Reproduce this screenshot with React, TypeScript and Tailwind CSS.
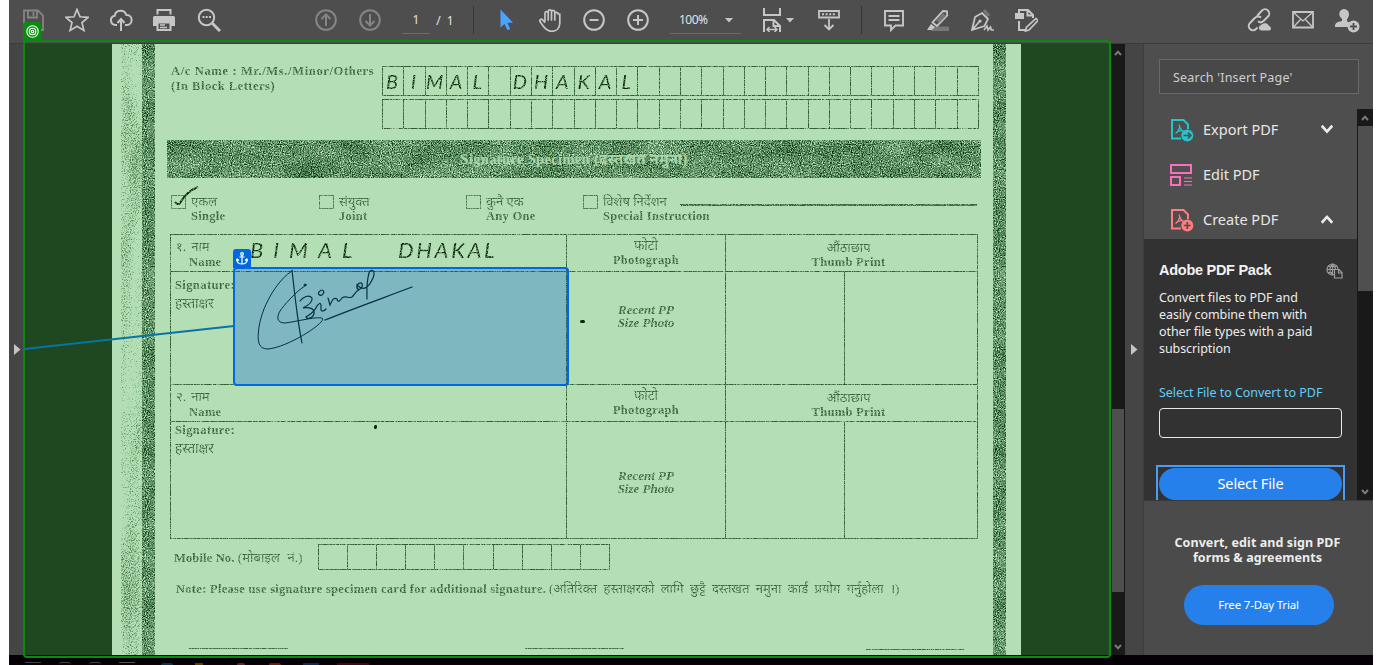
import React from "react";
import clsx from "clsx";

const SERIF = "font-['Liberation_Serif','Noto_Sans_Devanagari','Noto_Sans',serif]";
const UI = "font-['Noto_Sans','Open_Sans',sans-serif]";

function Slot({ children, className }: { children: React.ReactNode; className?: string }) {
  return <div className={clsx("flex h-10 w-11 shrink-0 items-center justify-center", className)}>{children}</div>;
}

function Icon({ children, w = 24, h = 24, sw = 2, className }: { children: React.ReactNode; w?: number; h?: number; sw?: number; className?: string }) {
  return (
    <svg width={w} height={h} viewBox={`0 0 ${w} ${h}`} fill="none" stroke="currentColor" strokeWidth={sw} className={clsx("shrink-0", className)}>
      {children}
    </svg>
  );
}

function Toolbar() {
  return (
    <div className="flex h-11 shrink-0 items-start border-b border-[#3b3b3b] bg-[#4e4e4e] pl-[2px] text-[#c6c6c6]">
      <Slot className="text-[#858585]">
        <Icon sw={1.8}>
          <path d="M3 2.5h14l5 5V22H3zM7 2.5v7h9v-7M12.500 4v4" />
        </Icon>
      </Slot>
      <Slot>
        <Icon sw={1.7}>
          <path d="M12 1.500l3 7.300 8 .6-6 5.200 1.900 7.800L12 18.200l-6.900 4.200L7 14.600 1 9.400l8-.6z" />
        </Icon>
      </Slot>
      <Slot>
        <Icon sw={2}>
          <path d="M8 17H6.500a4.700 4.700 0 0 1-.8-9.300A6 6 0 0 1 17.300 7 4.800 4.800 0 0 1 18 17h-2M12 23V11.500M8.500 15L12 11l3.500 4" />
        </Icon>
      </Slot>
      <Slot className="-ml-px mr-px">
        <Icon>
          <path d="M5.500 6.500V2h13v4.500" />
          <path d="M2.500 8h19a1.500 1.500 0 0 1 1.500 1.500V18h-4v-3H5v3H1V9.500A1.500 1.500 0 0 1 2.500 8z" fill="currentColor" stroke="none" />
          <path d="M5.500 14.500h13V22h-13z" fill="#4e4e4e" />
          <path d="M8 17h5M8 19.500h7" strokeWidth="1.300" />
        </Icon>
      </Slot>
      <Slot>
        <Icon>
          <circle cx="9.500" cy="9.500" r="7.700" />
          <path d="M15.300 15.300L23 23" strokeWidth="3" />
          <path d="M5.500 9h2M8.700 9h2M12 9h2" />
        </Icon>
      </Slot>
      <Slot className="ml-[73px] text-[#858585]">
        <Icon>
          <circle cx="12" cy="12" r="9.800" />
          <path d="M12 18V7M7.500 11L12 6.500l4.500 4.500" />
        </Icon>
      </Slot>
      <Slot className="text-[#858585]">
        <Icon>
          <circle cx="12" cy="12" r="9.800" />
          <path d="M12 6v11M7.500 13l4.500 4.500 4.500-4.500" />
        </Icon>
      </Slot>
      <div className={clsx("ml-[10px] flex h-[34px] w-[28px] items-center justify-center border-b border-[#6b6b6b] pt-[7px] text-[12px] text-[#e2e2e2]", UI)}>1</div>
      <div className={clsx("ml-[4px] mr-px flex h-[34px] w-[22px] items-center justify-center whitespace-pre pt-[7px] text-[12px] text-[#e2e2e2] [word-spacing:3px]", UI)}>/ 1</div>
      <div className="ml-[16px] mt-[6px] h-7 w-px bg-[#383838]" />
      <Slot className="ml-[10px] text-[#4ba3ff]">
        <Icon>
          <path d="M6.500 1.500v18l4-3.600 3 6.300 2.700-1.300-2.800-6.200H19z" fill="currentColor" stroke="none" />
        </Icon>
      </Slot>
      <Slot>
        <Icon sw={1.700}>
          <path d="M7 13.500V5.300a1.600 1.600 0 0 1 3.200 0V12 3.200a1.700 1.700 0 0 1 3.300 0V12 3.600a1.700 1.700 0 0 1 3.300 0V12 6a1.600 1.600 0 0 1 3.200 0l1.800 0V15c0 5-3 8.300-8.200 8.300-5.400 0-7.800-4.300-11.600-9.800-.9-2 1.500-3 2.800-1.500L7 14.700" strokeLinejoin="round" />
        </Icon>
      </Slot>
      <Slot>
        <Icon>
          <circle cx="12" cy="12" r="9.800" />
          <path d="M7.500 12h9" />
        </Icon>
      </Slot>
      <Slot>
        <Icon>
          <circle cx="12" cy="12" r="9.800" />
          <path d="M7 12h10M12 7v10" />
        </Icon>
      </Slot>
      <div className={clsx("ml-[10px] flex h-[34px] w-[71px] items-center border-b border-[#6b6b6b] pl-[9px] pt-[7px] text-[12px] text-[#e2e2e2]", UI)}>
        <span className="w-[46px] tracking-[-0.500px]">100%</span>
        <Icon w={8} h={5} sw={0}><path d="M0 0h8L4 4.500z" fill="#c6c6c6" /></Icon>
      </div>
      <div className="ml-[20px] flex h-10 w-[36px] items-center">
        <Icon sw={2} className="-ml-px">
          <path d="M4 0v7h16V0M4 24V12h10l6 6v6M13.500 12v6H20" />
          <path d="M7 21.500h10M9.500 19L7 21.500 9.500 24M14.500 19l2.500 2.500L14.500 24" strokeWidth="1.500" />
        </Icon>
        <Icon w={8} h={5} sw={0} className="ml-[2px]"><path d="M0 0h8L4 4.500z" fill="currentColor" /></Icon>
      </div>
      <Slot className="ml-[10px]">
        <Icon>
          <path d="M2 3h20v6.500H2zM12 11v10.500M7.500 17l4.500 4.500 4.500-4.500" strokeWidth="1.800" />
          <path d="M5 6.200h14" strokeDasharray="2 1.600" />
        </Icon>
      </Slot>
      <div className="ml-[10px] mt-[6px] h-7 w-px bg-[#383838]" />
      <Slot className="ml-[10px]">
        <Icon sw={1.900}>
          <path d="M3 3h18v14.500h-7.500L9 22v-4.500H3zM6.500 8h11M6.500 12h11" />
        </Icon>
      </Slot>
      <Slot>
        <Icon>
          <path d="M9 18.500h14V23H5z" fill="#777" stroke="none" />
          <path d="M17 3l4 .3.200 4L11 18l-4.500-3.500z" strokeWidth="1.800" />
          <path d="M17 5l3 3-7 7-3-3z" fill="#777" stroke="none" />
          <path d="M5 16l4 3-3 3H1z" fill="currentColor" stroke="none" />
        </Icon>
      </Slot>
      <Slot>
        <Icon sw={1.800}>
          <path d="M14 2l5 6" stroke="#777" strokeWidth="3" />
          <path d="M12 5l6 6-3.500 7L2 22 5 9zM2.500 21.500l7-8" />
          <circle cx="10" cy="13" r="1.600" fill="currentColor" stroke="none" />
          <path d="M14 22l3-4 1 4 2.500-3 .8 3H24" strokeWidth="1.600" />
        </Icon>
      </Slot>
      <Slot>
        <Icon>
          <path d="M1 5h9v6H1z" fill="currentColor" stroke="none" />
          <path d="M5 5V2h9l5 5v3M13.500 2v5.500H19M5 13v9h7" />
          <path d="M22 10.500l2 2L15 22l-3.500 1 .8-3.500z" strokeWidth="1.700" />
        </Icon>
      </Slot>
      <Slot className="ml-[189px]">
        <Icon sw={2}>
          <path d="M10 8l5-5.500a4.200 4.200 0 0 1 6 6L16.500 13a4.200 4.200 0 0 1-5.500.3M14 9.500a4.200 4.200 0 0 0-6 .3L3 15a4.200 4.200 0 0 0 6 6l1.500-1.500" />
          <path d="M14 23a3.300 3.300 0 0 1 .3-6.500A4.500 4.500 0 0 1 22 17.500 3 3 0 0 1 23 23z" fill="currentColor" stroke="#4e4e4e" strokeWidth="1" />
        </Icon>
      </Slot>
      <Slot>
        <Icon sw={1.800}>
          <path d="M2 4h20v15.500H2z" />
          <path d="M2 4l10 9 10-9M2 19.500l7.500-8M22 19.500l-7.500-8" strokeWidth="1.300" />
        </Icon>
      </Slot>
      <Slot>
        <Icon w={26} h={26}>
          <path d="M10 2a5 5 0 0 1 5 5.200c0 2.400-1 3.600-2 5v2l3 1.500a6.500 6.500 0 0 0-2 4.300H1c0-4.500 2-4.700 7-6v-2C6.500 10.500 5.300 9 5.300 7A4.800 4.800 0 0 1 10 2z" fill="currentColor" stroke="none" />
          <circle cx="19.500" cy="19.500" r="6" fill="currentColor" stroke="none" />
          <path d="M16 19.500h7M19.500 16v7" stroke="#4e4e4e" strokeWidth="1.800" />
        </Icon>
      </Slot>
    </div>
  );
}

function Filters() {
  const gray = "1 0 0 0 0  1 0 0 0 0  1 0 0 0 0  0 0 0 0 1";
  return (
    <svg width="0" height="0" className="absolute">
      <filter id="band" x="0" y="0" width="100%" height="100%" colorInterpolationFilters="sRGB">
        <feTurbulence type="fractalNoise" baseFrequency="0.9" numOctaves="2" seed="4" />
        <feColorMatrix values={gray} result="fine" />
        <feTurbulence type="fractalNoise" baseFrequency="0.025 0.05" numOctaves="3" seed="9" />
        <feColorMatrix values={gray} result="coarse" />
        <feComposite in="fine" in2="coarse" operator="arithmetic" k2="0.820" k3="0.180" />
        <feColorMatrix values="1.750 0 0 0 -0.500  1.600 0 0 0 -0.235  1.650 0 0 0 -0.430  0 0 0 0 1" />
      </filter>
      <filter id="speck" x="0" y="0" width="100%" height="100%" colorInterpolationFilters="sRGB">
        <feTurbulence type="fractalNoise" baseFrequency="0.85" numOctaves="2" seed="12" />
        <feColorMatrix values={gray} result="fine" />
        <feTurbulence type="fractalNoise" baseFrequency="0.05 0.012" numOctaves="2" seed="3" />
        <feColorMatrix values={gray} result="coarse" />
        <feComposite in="fine" in2="coarse" operator="arithmetic" k2="0.650" k3="0.350" />
        <feColorMatrix values="0 0 0 0 0.270  0 0 0 0 0.480  0 0 0 0 0.290  4.500 0 0 0 -2.350" />
      </filter>
      <filter id="worn" x="0" y="0" width="100%" height="100%" colorInterpolationFilters="sRGB">
        <feTurbulence type="fractalNoise" baseFrequency="0.9" numOctaves="2" seed="7" />
        <feColorMatrix values="0 0 0 0 0  0 0 0 0 0  0 0 0 0 0  2.500 0 0 0 -0.450" result="m" />
        <feComposite in="SourceGraphic" in2="m" operator="in" />
      </filter>
    </svg>
  );
}

function Noise({ filter, className }: { filter: string; className: string }) {
  return (
    <svg className={className} preserveAspectRatio="none">
      <rect width="100%" height="100%" fill="#5c8c60" filter={`url(#${filter})`} />
    </svg>
  );
}

function CharRow({ text }: { text: string }) {
  return (
    <div className="flex h-[30px] w-[597px] border border-[#2f5c33]">
      {Array.from({ length: 28 }, (_, i) => (
        <div key={i} className={clsx("flex min-w-0 flex-1 items-center justify-center pr-[2px]", i < 27 && "border-r border-[#2f5c33]")}>
          <span className="font-['Lato','Noto_Sans',sans-serif] text-[20px] italic leading-none text-[#08260c]">{text[i] ?? ""}</span>
        </div>
      ))}
    </div>
  );
}

function Option({ np, en, width, checked }: { np: string; en: string; width: string; checked?: boolean }) {
  return (
    <div className={clsx("flex", width)}>
      <div className="mt-[7px] h-[14px] w-[15px] shrink-0 border border-[#4a784d]">
        {checked && (
          <svg width="30" height="20" viewBox="0 0 30 20" className="-mt-[9px] ml-[2px] overflow-visible" fill="none" stroke="#08260c" strokeWidth="2">
            <path d="M1 15c1.500 2 4 3 5 1C10 9 16 3 24 0" />
          </svg>
        )}
      </div>
      <div className="pl-[5px] pt-[6px]">
        <div className="h-[15px] text-[13px] leading-[16px]">{np}</div>
        <div className="text-[12.500px] font-bold leading-[15px] tracking-[0.300px]">{en}</div>
      </div>
    </div>
  );
}

function NameCell({ no, hand }: { no: string; hand?: boolean }) {
  return (
    <div className="flex w-[396px] border-r border-[#2f5c33]">
      <div className="w-[79px] pl-[5px] pt-[3px]">
        <div className="h-[16px] text-[13px] leading-[18px] [word-spacing:2px]">{no}. नाम</div>
        <div className="pl-[13px] text-[12.500px] font-bold leading-[16px] tracking-[0.300px]">Name</div>
      </div>
      {hand && (
        <div className="flex font-['Lato','Noto_Sans',sans-serif] text-[22px] italic leading-[29px] text-[#08260c]">
          <span className="w-[148px] tracking-[10px]">BIMAL</span>
          <span className="tracking-[2.700px]">DHAKAL</span>
        </div>
      )}
    </div>
  );
}

function Entry({ no, hand, head, body, sign, photo }: { no: string; hand?: boolean; head: string; body: string; sign: string; photo: string }) {
  return (
    <>
      <div className={clsx("flex border-b border-[#2f5c33]", head)}>
        <NameCell no={no} hand={hand} />
        <div className="w-[159px] border-r border-[#2f5c33] pt-[2px] text-center">
          <div className="h-[15px] text-[13.500px] leading-[17px]">फोटो</div>
          <div className="text-[12.500px] font-bold leading-[16px] tracking-[0.300px]">Photograph</div>
        </div>
        <div className="flex-1 pr-[6px] pt-[3px] text-center">
          <div className="h-[16px] text-[13px] leading-[19px]">औंठाछाप</div>
          <div className="text-[12.500px] font-bold leading-[17px] tracking-[0.300px]">Thumb Print</div>
        </div>
      </div>
      <div className={clsx("flex", body)}>
        <div className={clsx("w-[396px] border-r border-[#2f5c33] pl-[4px]", sign)}>
          <div className="text-[12.500px] font-bold leading-[17px] tracking-[0.400px]">Signature:</div>
          <div className="pt-px text-[13.500px] leading-[18px]">हस्ताक्षर</div>
        </div>
        <div className={clsx("w-[159px] border-r border-[#2f5c33] text-center text-[13px] font-bold italic leading-[13px]", photo)}>
          Recent PP
          <br />
          Size Photo
        </div>
        <div className="w-[119px] border-r border-[#2f5c33]" />
        <div className="flex-1" />
      </div>
    </>
  );
}

function ScannedForm() {
  return (
    <div className={clsx("flex h-[611px] w-[909px] overflow-hidden bg-[#b4deb4] text-[#34633a]", SERIF)}>
      <Noise filter="speck" className="ml-[9px] h-full w-[21px]" />
      <Noise filter="band" className="h-full w-[13px]" />
      <div className="flex h-full w-[838px] flex-col whitespace-nowrap">
        <div className="flex flex-col [filter:url(#worn)]">
          <div className="flex h-[96px] pt-[22px]">
            <div className="w-[227px] pl-[16px] text-[12.500px] font-bold leading-[15px]">
              <div className="-mt-[2px] tracking-[0.650px]">A/c Name : Mr./Ms./Minor/Others</div>
              <div className="tracking-[0.500px]">(In Block Letters)</div>
            </div>
            <div className="flex flex-col gap-[3px]">
              <CharRow text="BIMAL DHAKAL" />
              <CharRow text="" />
            </div>
          </div>
        </div>
        <div className="ml-[12px] grid h-[38px] w-[814px] shrink-0">
          <Noise filter="band" className="col-start-1 row-start-1 h-[38px] w-[814px]" />
          <div className="relative col-start-1 row-start-1 flex items-center justify-center pt-[2px] text-[14.500px] font-bold tracking-[0.350px] text-[#a9d5aa]">
            Signature Specimen (दस्तखत नमुना)
          </div>
        </div>
        <div className="flex h-[477px] flex-col [filter:url(#worn)]">
          <div className="flex h-[56px] pl-[16px] pt-[10px]">
            <Option np="एकल" en="Single" width="w-[148px]" checked />
            <Option np="संयुक्त" en="Joint" width="w-[147px]" />
            <Option np="कुनै एक" en="Any One" width="w-[117px]" />
            <Option np="विशेष निर्देशन" en="Special Instruction" width="w-[97px]" />
            <div className="mt-[16px] h-[2px] w-[297px] bg-[#34633a]" />
          </div>
          <div className="ml-[15px] flex h-[305px] w-[808px] flex-col border border-[#2f5c33]">
            <Entry no="१" hand head="h-[37px]" body="h-[113px] border-b border-[#2f5c33]" sign="pt-[5px]" photo="pt-[31px]" />
            <Entry no="२" head="h-[37px]" body="h-[116px]" sign="pt-0" photo="pt-[47px]" />
          </div>
          <div className="flex h-[33px] items-start pl-[19px] pt-[5px]">
            <div className="w-[144px] pt-[5px] text-[12.500px] font-bold leading-[18px] tracking-[0.150px]">
              Mobile No. <span className="text-[13px] font-normal [word-spacing:4px]">(मोबाइल नं.)</span>
            </div>
            <div className="flex h-[26px] w-[292px] border border-[#2f5c33]">
              {Array.from({ length: 10 }, (_, i) => (
                <div key={i} className={clsx("flex-1", i < 9 && "border-r border-[#2f5c33]")} />
              ))}
            </div>
          </div>
          <div className="flex h-[27px] pl-[21px] pt-[7px] text-[12.500px] leading-[20px]">
            <span className="w-[373px] font-bold tracking-[0.290px]">Note: Please use signature specimen card for additional signature.</span>
            <span className="text-[13px] [word-spacing:3.200px]">(अतिरिक्त हस्ताक्षरको लागि छुट्टै दस्तखत नमुना कार्ड प्रयोग गर्नुहोला ।)</span>
          </div>
          <div className="mt-[49px] flex pl-[34px]">
            <div className="h-px w-[99px] bg-[#34633a]" />
            <div className="ml-[237px] h-px w-[99px] bg-[#34633a]" />
            <div className="ml-[242px] mt-px h-px w-[98px] bg-[#34633a]" />
          </div>
        </div>
      </div>
      <Noise filter="band" className="h-full w-[13px]" />
    </div>
  );
}

function Chevron({ up, w = 8, sw = 2, className }: { up?: boolean; w?: number; sw?: number; className?: string }) {
  return (
    <svg width={w} height={w * 0.75} viewBox="0 0 8 6" fill="none" stroke="currentColor" strokeWidth={sw} className={clsx("shrink-0", className)}>
      <path d={up ? "M1 5l3-3.300L7 5" : "M1 1l3 3.300L7 1"} />
    </svg>
  );
}

function Scrollbar({ className, before, thumb }: { className: string; before: string; thumb: string }) {
  return (
    <div className={clsx("flex shrink-0 flex-col items-center bg-[#191919] text-[#7c7c7c]", className)}>
      <Chevron up className="mt-[6px]" />
      <div className={before} />
      <div className={clsx("self-stretch bg-[#4f4f4f]", thumb)} />
      <div className="flex-1" />
      <Chevron className="mb-[5px]" />
    </div>
  );
}

function PdfIcon({ plus, className }: { plus?: boolean; className: string }) {
  return (
    <svg width="24" height="24" viewBox="0 0 24 24" fill="none" stroke="currentColor" strokeWidth="2" className={className}>
      <path d="M11 20.500H2V2h11.500L18 6.500V11" />
      <path d="M9 6.500c1 4 2 6 5 7M9.800 9C9 12 8 14 5.500 15.500M6 14.500c2-1.500 4.500-2 7-1.800" strokeWidth="1.200" />
      <circle cx="17.300" cy="17.500" r="6" fill="currentColor" stroke="none" />
      <path d={plus ? "M13.800 17.500h7M17.300 14v7" : "M13.500 17.500h7M18 14.700l2.800 2.800-2.800 2.800"} stroke="#4e4e4e" strokeWidth="1.700" />
    </svg>
  );
}

function Tool({ icon, label, arrow }: { icon: React.ReactNode; label: string; arrow?: React.ReactNode }) {
  return (
    <div className="flex h-[45px] items-center pl-[26px]">
      <div className="w-[33px]">{icon}</div>
      <div className="w-[117px] text-[14.500px] text-[#e6e6e6]">{label}</div>
      <div className="text-[#ececec]">{arrow}</div>
    </div>
  );
}

function SidePanel() {
  return (
    <div className={clsx("flex w-[230px] shrink-0 flex-col border-l border-[#3c3c3c] bg-[#4e4e4e]", UI)}>
      <div className="ml-[15px] mt-[15px] flex h-[35px] w-[200px] shrink-0 items-center border border-[#686868] bg-[#484848] pl-[13px] pt-[3px] text-[12.500px] tracking-[0.200px] text-[#cfcfcf]">
        Search 'Insert Page'
      </div>
      <div className="mt-[15px] flex h-[391px] shrink-0">
        <div className="flex w-[213px] flex-col overflow-hidden">
          <div className="-mt-[2px] shrink-0">
            <Tool icon={<PdfIcon className="text-[#26c3cb]" />} label="Export PDF" arrow={<Chevron w={14} sw={1.500} />} />
            <Tool
              icon={
                <svg width="24" height="24" viewBox="0 0 24 24" fill="none" stroke="#f76fbd" strokeWidth="2" className="-ml-px">
                  <path d="M2 2h20v8H2zM2 14h9v8H2z" />
                  <path d="M15 15h8M15 18.500h8M15 22h8" strokeWidth="1.200" />
                </svg>
              }
              label="Edit PDF"
            />
            <div className="h-[42px]">
              <Tool icon={<PdfIcon plus className="text-[#ff7c80]" />} label="Create PDF" arrow={<Chevron up w={14} sw={1.500} />} />
            </div>
          </div>
          <div className="flex h-[261px] shrink-0 flex-col bg-[#323232] pl-[15px]">
            <div className="mt-[22px] flex h-[20px] w-[184px] items-center justify-between">
              <span className="font-['Liberation_Sans',sans-serif] text-[14.500px] font-bold tracking-[-0.270px] text-[#f2f2f2]">Adobe PDF Pack</span>
              <svg width="17" height="16" viewBox="0 0 17 16" fill="none" stroke="#9b9b9b" strokeWidth="1.200">
                <circle cx="6.500" cy="6.500" r="5.500" />
                <path d="M1 6.500h7M2 3.500h9M2 9.500h5M6.500 1v11M6.500 1c-4 4-3 8 0 11M6.500 1c2 1.500 2.600 3 3 5" />
                <path d="M8.500 6.500h4.500l3 3V15H8.500zM12.500 6.500V10H16" fill="#323232" />
              </svg>
            </div>
            <div className="mt-[8px] text-[12.500px] leading-[17px] tracking-[-0.080px] text-[#ececec]">
              Convert files to PDF and
              <br />
              easily combine them with
              <br />
              other file types with a paid
              <br />
              subscription
            </div>
            <div className="mt-[27px] text-[12.500px] leading-[17px] tracking-[-0.040px] text-[#62cdf8]">Select File to Convert to PDF</div>
            <div className="mt-[7px] h-[30px] w-[183px] shrink-0 rounded-[4px] border border-[#e8e8e8]" />
            <div className="-ml-[3px] mt-[27px] flex h-[40px] w-[189px] shrink-0 border-2 border-[#4b9cf5] p-px">
              <div className="flex h-[32px] flex-1 items-center justify-center rounded-full bg-[#2680eb] text-[14.500px] tracking-[-0.100px] text-white">Select File</div>
            </div>
          </div>
        </div>
        <Scrollbar className="w-4" before="h-[5px]" thumb="h-[165px] ml-px" />
      </div>
      <div className="flex flex-1 flex-col items-center border-t border-[#3a3a3a] bg-[#4b4b4b]">
        <div className="mt-[34px] pr-[2px] text-center text-[12.500px] font-bold leading-[15px] tracking-[0.080px] text-[#ececec]">
          Convert, edit and sign PDF
          <br />
          forms &amp; agreements
        </div>
        <div className="mt-[20px] flex h-[40px] w-[150px] items-center justify-center rounded-full bg-[#2680eb] text-[11.500px] tracking-[-0.180px] text-white">Free 7-Day Trial</div>
      </div>
    </div>
  );
}

function Annotations() {
  return (
    <>
      <div className="absolute left-[23px] top-[40px] h-[618px] w-[1088px] rounded-[4px] border-2 border-[#0a8a0e]" />
      <div className="absolute left-[23px] top-[22px] flex h-[20px] w-[18px] items-start justify-center rounded-t-[3px] bg-[#0a8a0e] pt-[3px]">
        <svg width="13" height="13" viewBox="0 0 13 13" fill="none" stroke="#fff" strokeWidth="1.100">
          <circle cx="6.500" cy="6.500" r="5.700" />
          <circle cx="6.500" cy="6.500" r="3.300" />
          <circle cx="6.500" cy="6.500" r="1.300" />
        </svg>
      </div>
      <svg className="absolute left-[24px] top-[320px]" width="212" height="34" viewBox="0 0 212 34">
        <path d="M0 29L210 6" stroke="#0874a4" strokeWidth="2" />
      </svg>
      <div className="absolute left-[233px] top-[267px] h-[119px] w-[336px] rounded-[4px] border-2 border-[#0068e0] bg-[#005cdc]/30" />
      <svg className="absolute left-[233px] top-[267px]" width="190" height="90" viewBox="0 0 190 90" fill="none" stroke="#073044" strokeWidth="1" strokeLinecap="round">
        <path d="M59 4C47 11 30 35 26 60c-2 14-1 22 9 22 20-2 54-24 55-30-2-4-28 3-38 4-9 0-8-7-5-12 4-6 15-18 22-23l4-3" />
        <path d="M59 3c2 17 5 49 10 73M67 34c3-4 9-7 12-3 1 4-5 8-9 10 6-1 12 0 11 6-1 4-7 6-8 3 3-2 8-4 11-11 2-2 3-4 4-1v5c1 2 3 1 5-1M86 25c3-4 6-1 4 2-2 3-6 0-4-2M95 31l2 7c2-5 4-8 7-6 1 4 3 2 5-1 4-3 7 1 10-1 3-3 3-5 8-8M124 18c4-4 6-2 5 2-2 4-6 3-5-2 6 6 11 4 16-7 3-8-2-10-4-5-3 11-2 18-2 26" strokeWidth="1.200" />
        <path d="M92 53c30-12 58-22 87-33" strokeWidth="1.300" />
        <circle cx="72" cy="18" r="1" fill="#073044" />
      </svg>
      <div className="absolute left-[233px] top-[249px] flex h-[19px] w-[18px] items-center justify-center rounded-t-[3px] bg-[#0068e0]">
        <svg width="12" height="13" viewBox="0 0 12 13" fill="none" stroke="#fff" strokeWidth="1.200">
          <circle cx="6" cy="2" r="1.300" />
          <path d="M6 3.500V12M3.500 5h5M1 7.500c0 3 2 4.500 5 4.500s5-1.500 5-4.500M0 9l1.200-2L3 8.500M12 9l-1.200-2L9 8.500" />
        </svg>
      </div>
      <div className="absolute left-[580px] top-[320px] h-[3px] w-[5px] rounded-full bg-[#08260c]" />
      <div className="absolute left-[374px] top-[425px] h-[4px] w-[3px] rotate-12 rounded-full bg-[#08260c]" />
    </>
  );
}

function Taskbar() {
  return (
    <div className="flex h-[10px] items-end gap-[18px] bg-[#050006] pl-4">
      <div className="h-[3px] w-4 border-t border-[#444]" />
      <div className="h-[3px] w-3 rounded-t-full border-t border-[#444]" />
      <div className="h-[3px] w-3 rounded-t-full border-t border-[#444]" />
      <div className="h-[3px] w-4 border-t border-[#555]" />
      <div className="ml-2 h-[2px] w-[12px] rounded-t-full bg-[#063452]" />
      <div className="ml-1 h-[2px] w-2 bg-[#5b4200]" />
      <div className="ml-4 h-[2px] w-2 rounded-t-full bg-[#5b2a2c]" />
      <div className="ml-[6px] h-[2px] w-3 rounded-t-full bg-[#6a200c]" />
      <div className="ml-1 h-[2px] w-4 bg-[#0a2a60]" />
      <div className="h-[2px] w-8 bg-[#3c0a10]" />
    </div>
  );
}

export default function App() {
  return (
    <div className="relative h-[665px] w-[1384px] overflow-hidden bg-white pl-[9px]">
      <Filters />
      <div className="flex h-[665px] w-[1364px] flex-col">
        <Toolbar />
        <div className="flex h-[611px] shrink-0">
          <div className="flex w-[15px] items-center bg-[#454545] pl-[5px]">
            <svg width="7" height="11" viewBox="0 0 7 11"><path d="M0 0l6.500 5.500L0 11z" fill="#c4c4c4" /></svg>
          </div>
          <div className="flex h-[611px] w-[1087px] bg-[#1f4720] pl-[88px]">
            <ScannedForm />
          </div>
          <Scrollbar className="w-[14px]" before="h-[353px]" thumb="h-[183px] ml-px mr-px" />
          <div className="flex w-[18px] items-center bg-[#454545] pl-[6px]">
            <svg width="7" height="11" viewBox="0 0 7 11"><path d="M0 0l6.500 5.500L0 11z" fill="#c4c4c4" /></svg>
          </div>
          <SidePanel />
        </div>
        <Taskbar />
      </div>
      <Annotations />
    </div>
  );
}
